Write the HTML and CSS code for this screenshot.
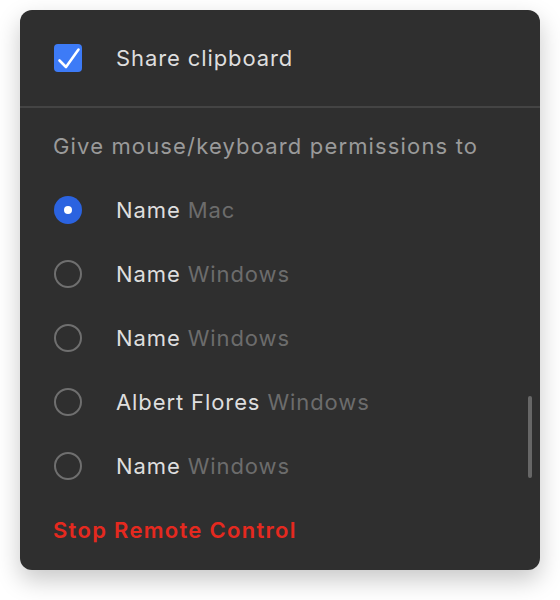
FILE: index.html
```html
<!DOCTYPE html>
<html>
<head>
<meta charset="utf-8">
<link rel="stylesheet" href="styles.css">
</head>
<body>
<div class="panel">
  <div class="top">
    <span class="checkbox">
      <svg width="28" height="28" viewBox="0 0 28 28"><path d="M5.5 16.5 L12 23 L24.5 5.5" fill="none" stroke="#fff" stroke-width="2.6" stroke-linecap="round" stroke-linejoin="round"/></svg>
    </span>
    <span class="label">Share clipboard</span>
  </div>
  <div class="divider"></div>
  <div class="list">
    <div class="header">Give mouse/keyboard permissions to</div>
    <div class="row"><span class="radio on"></span><span class="label">Name <span class="sub">Mac</span></span></div>
    <div class="row"><span class="radio"></span><span class="label">Name <span class="sub">Windows</span></span></div>
    <div class="row"><span class="radio"></span><span class="label">Name <span class="sub">Windows</span></span></div>
    <div class="row"><span class="radio"></span><span class="label">Albert Flores <span class="sub">Windows</span></span></div>
    <div class="row"><span class="radio"></span><span class="label">Name <span class="sub">Windows</span></span></div>
    <div class="stop">Stop Remote Control</div>
  </div>
  <div class="scrollbar"></div>
</div>
</body>
</html>
```
FILE: styles.css
```css
html, body {
  margin: 0;
  padding: 0;
  background: #ffffff;
}
body {
  font-family: Inter, "Noto Sans", sans-serif;
  font-size: 22px;
  padding: 10px 20px 30px 20px;
}
.panel {
  position: relative;
  width: 520px;
  height: 560px;
  box-sizing: border-box;
  background: #2f2f2f;
  border-radius: 12px;
  box-shadow: 0 10px 24px rgba(0, 0, 0, 0.22);
  overflow: hidden;
}
.top {
  height: 96px;
  display: flex;
  align-items: center;
  padding-left: 34px;
}
.checkbox {
  width: 28px;
  height: 28px;
  border-radius: 4px;
  background: #3d7bf7;
  display: flex;
  flex-shrink: 0;
}
.label {
  margin-left: 34px;
  color: #dedede;
  line-height: 28px;
  letter-spacing: 0.9px;
}
.sub {
  color: #6c6c6c;
}
.divider {
  height: 2px;
  background: #444444;
}
.list {
  padding: 18px 0 0 33px;
  display: flex;
  flex-direction: column;
}
.header {
  height: 40px;
  line-height: 40px;
  color: #9a9a9a;
  margin-bottom: 12px;
  letter-spacing: 1.15px;
}
.row {
  height: 64px;
  display: flex;
  align-items: center;
}
.radio {
  width: 28px;
  height: 28px;
  box-sizing: border-box;
  border-radius: 50%;
  border: 2.5px solid #6f6f6f;
  margin-left: 1px;
  flex-shrink: 0;
  display: flex;
  align-items: center;
  justify-content: center;
}
.radio.on {
  border: none;
  background: #2b63e0;
}
.radio.on::after {
  content: "";
  width: 8px;
  height: 8px;
  border-radius: 50%;
  background: #ffffff;
}
.stop {
  height: 64px;
  line-height: 64px;
  color: #e5291f;
  font-weight: 600;
  letter-spacing: 1.3px;
}
.scrollbar {
  position: absolute;
  left: 508px;
  top: 386px;
  width: 4px;
  height: 82px;
  border-radius: 2px;
  background: #676767;
}
```
